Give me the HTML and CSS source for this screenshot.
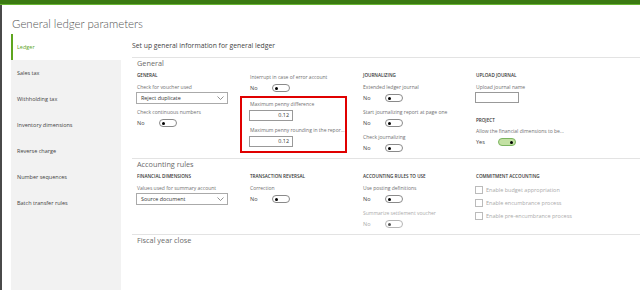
FILE: index.html
```html
<!DOCTYPE html>
<html lang="en">
<head>
    <meta charset="UTF-8">
    <meta name="viewport" content="width=device-width, initial-scale=1.0">
    <title>General ledger parameters</title>
    <link rel="stylesheet" href="styles.css">
</head>
<body>
    <div class="topbar"></div>
    <div class="page">
        <div class="title">General ledger parameters</div>
        <div class="layout">
            <div class="nav">
                <div class="nav-item active">Ledger</div>
                <div class="nav-item">Sales tax</div>
                <div class="nav-item">Withholding tax</div>
                <div class="nav-item">Inventory dimensions</div>
                <div class="nav-item">Reverse charge</div>
                <div class="nav-item">Number sequences</div>
                <div class="nav-item">Batch transfer rules</div>
            </div>

            <div class="main">
                <div class="intro">Set up general information for general ledger</div>

                <!-- General -->
                <div class="section">
                    <div class="section-title">General</div>
                    <div class="cols">
                        <div class="col">
                            <div class="group-head">General</div>
                            <div class="field">
                                <div class="label">Check for voucher used</div>
                                <div class="dropdown">
                                    <span>Reject duplicate</span>
                                    <svg width="7" height="4" viewBox="0 0 7 4"><polyline points="0.5,0.5 3.5,3.5 6.5,0.5" fill="none" stroke="#666" stroke-width="0.7"/></svg>
                                </div>
                            </div>
                            <div class="field">
                                <div class="label">Check continuous numbers</div>
                                <div class="toggle-row"><span class="value">No</span><span class="toggle"></span></div>
                            </div>
                        </div>

                        <div class="col col-offset">
                            <div class="field">
                                <div class="label">Interrupt in case of error account</div>
                                <div class="toggle-row"><span class="value">No</span><span class="toggle"></span></div>
                            </div>
                            <div class="highlight">
                                <div class="field">
                                    <div class="label">Maximum penny difference</div>
                                    <div class="input num">0.12</div>
                                </div>
                                <div class="field">
                                    <div class="label">Maximum penny rounding in the repor...</div>
                                    <div class="input num">0.12</div>
                                </div>
                            </div>
                        </div>

                        <div class="col">
                            <div class="group-head">Journalizing</div>
                            <div class="field">
                                <div class="label">Extended ledger journal</div>
                                <div class="toggle-row"><span class="value">No</span><span class="toggle"></span></div>
                            </div>
                            <div class="field">
                                <div class="label">Start journalizing report at page one</div>
                                <div class="toggle-row"><span class="value">No</span><span class="toggle"></span></div>
                            </div>
                            <div class="field">
                                <div class="label">Check journalizing</div>
                                <div class="toggle-row"><span class="value">No</span><span class="toggle"></span></div>
                            </div>
                        </div>

                        <div class="col">
                            <div class="group-head">Upload journal</div>
                            <div class="field">
                                <div class="label">Upload journal name</div>
                                <div class="input"></div>
                            </div>
                            <div class="group-head spaced">Project</div>
                            <div class="field">
                                <div class="label">Allow the financial dimensions to be...</div>
                                <div class="toggle-row"><span class="value">Yes</span><span class="toggle on"></span></div>
                            </div>
                        </div>
                    </div>
                </div>

                <!-- Accounting rules -->
                <div class="section">
                    <div class="section-title">Accounting rules</div>
                    <div class="cols">
                        <div class="col">
                            <div class="group-head">Financial dimensions</div>
                            <div class="field">
                                <div class="label">Values used for summary account</div>
                                <div class="dropdown">
                                    <span>Source document</span>
                                    <svg width="7" height="4" viewBox="0 0 7 4"><polyline points="0.5,0.5 3.5,3.5 6.5,0.5" fill="none" stroke="#666" stroke-width="0.7"/></svg>
                                </div>
                            </div>
                        </div>

                        <div class="col">
                            <div class="group-head">Transaction reversal</div>
                            <div class="field">
                                <div class="label">Correction</div>
                                <div class="toggle-row"><span class="value">No</span><span class="toggle"></span></div>
                            </div>
                        </div>

                        <div class="col">
                            <div class="group-head">Accounting rules to use</div>
                            <div class="field">
                                <div class="label">Use posting definitions</div>
                                <div class="toggle-row"><span class="value">No</span><span class="toggle"></span></div>
                            </div>
                            <div class="field disabled">
                                <div class="label">Summarize settlement voucher</div>
                                <div class="toggle-row"><span class="value">No</span><span class="toggle"></span></div>
                            </div>
                        </div>

                        <div class="col">
                            <div class="group-head">Commitment accounting</div>
                            <div class="check-row"><span class="checkbox"></span>Enable budget appropriation</div>
                            <div class="check-row"><span class="checkbox"></span>Enable encumbrance process</div>
                            <div class="check-row"><span class="checkbox"></span>Enable pre-encumbrance process</div>
                        </div>
                    </div>
                </div>

                <!-- Fiscal year close -->
                <div class="section">
                    <div class="section-title">Fiscal year close</div>
                </div>
            </div>
        </div>
    </div>
</body>
</html>
```

FILE: styles.css
```css
body {
    margin: 0;
    padding: 0;
    height: 290px;
    overflow: hidden;
    background-color: #ffffff;
    font-family: "Open Sans", "Noto Sans", sans-serif;
    color: #333333;
}
.topbar {
    height: 4px;
    background-color: #3b7a12; /* verde oscuro */
    border-bottom: 1px solid #68b532;
}
.page {
    height: 285px;
    border-left: 2px solid #4a4a4a;
}
.title {
    font-family: "Lato", "Open Sans", sans-serif;
    font-weight: 300;
    font-size: 11.5px;
    line-height: 16px;
    padding: 11px 0 2px 10px;
    color: #555555;
}
.layout {
    display: flex;
    height: 256px;
}
.nav {
    width: 110px;
    margin-left: 9px;
    background-color: #f2f2f2;
}
.nav-item {
    height: 26px;
    line-height: 26px;
    padding-left: 6px;
    font-size: 5.5px;
    color: #444444;
}
.nav-item.active {
    background-color: #ffffff;
    color: #5ea51f;
    border-left: 2px solid #5ea51f;
    padding-left: 4px;
}
.main {
    flex: 1;
    margin-left: 11px;
}
.intro {
    font-size: 6.8px;
    line-height: 12px;
    margin-top: 6px;
    margin-bottom: 5px;
    color: #444444;
}
.section {
    border-top: 1px solid #e3e3e3;
    padding: 0 0 4px 5px;
}
.section-title {
    font-size: 7.3px;
    line-height: 10px;
    margin-bottom: 2px;
    color: #6a6a6a;
}
.cols {
    display: grid;
    grid-template-columns: 113px 113px 113px 1fr;
}
.col-offset {
    padding-top: 2px;
}
.group-head {
    font-size: 4.6px;
    font-weight: 600;
    text-transform: uppercase;
    line-height: 10px;
    margin-bottom: 2px;
    color: #333333;
}
.group-head.spaced {
    margin-top: 12px;
    margin-bottom: 1px;
}
.field {
    margin-bottom: 3px;
}
.field:last-child {
    margin-bottom: 0;
}
.label {
    font-size: 5px;
    line-height: 10px;
    color: #707070;
    white-space: nowrap;
}
.toggle-row {
    display: flex;
    align-items: center;
    height: 12px;
}
.value {
    width: 22px;
    font-size: 5.5px;
    color: #444444;
}
.toggle {
    position: relative;
    width: 18px;
    height: 8px;
    box-sizing: border-box;
    border: 1px solid #8a8a8a;
    border-radius: 4px;
    background-color: #ffffff;
}
.toggle::after {
    content: "";
    position: absolute;
    left: 2px;
    top: 1.5px;
    width: 3px;
    height: 3px;
    border-radius: 50%;
    background-color: #000000;
}
.toggle.on {
    background-color: #c3e1a3;
    border-color: #7cb561;
}
.toggle.on::after {
    left: auto;
    right: 2px;
}
.disabled .label,
.disabled .value {
    color: #aaaaaa;
}
.disabled .toggle {
    border-color: #b5b5b5;
}
.disabled .toggle::after {
    background-color: #555555;
}
.dropdown {
    display: flex;
    align-items: center;
    justify-content: space-between;
    width: 92px;
    height: 12px;
    box-sizing: border-box;
    margin-left: -1px;
    padding: 0 3px 0 4px;
    border: 1px solid #aaaaaa;
    font-size: 5.4px;
    color: #333333;
}
.input {
    width: 44px;
    height: 11px;
    box-sizing: border-box;
    margin-left: -1px;
    border: 1px solid #999999;
    font-size: 5.4px;
    line-height: 9px;
    color: #333333;
}
.input.num {
    text-align: right;
    padding-right: 3px;
    margin-top: 1px;
}
.highlight {
    width: 107px;
    box-sizing: border-box;
    margin: -1px 0 0 -10px;
    padding: 1px 0 4px 8px;
    border: 2px solid #e00000;
}
.highlight .field {
    margin-bottom: 4px;
}
.highlight .field:last-child {
    margin-bottom: 0;
}
.check-row {
    display: flex;
    align-items: center;
    height: 13px;
    font-size: 5.5px;
    color: #aaaaaa;
    white-space: nowrap;
}
.checkbox {
    width: 8px;
    height: 8px;
    box-sizing: border-box;
    border: 1px solid #bbbbbb;
    margin: 0 3px 0 -1px;
    background-color: #ffffff;
}
```
